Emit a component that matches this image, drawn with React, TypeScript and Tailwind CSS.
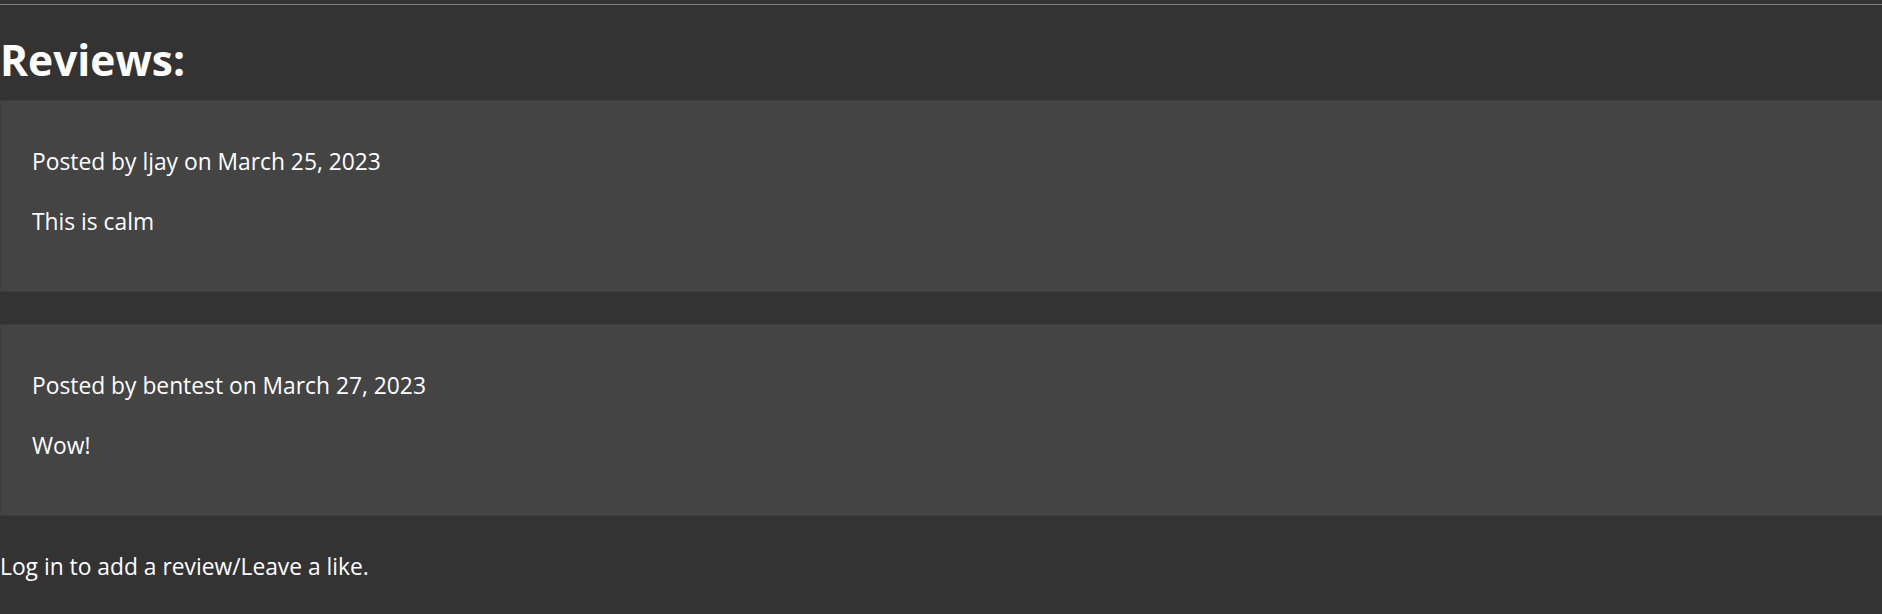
const reviews = [
  { user: "ljay", date: "March 25, 2023", body: "This is calm" },
  { user: "bentest", date: "March 27, 2023", body: "Wow!" },
];

export default function App() {
  return (
    <div className="min-h-[614px] bg-[#333333] pt-1 text-white font-['Open_Sans',sans-serif]">
      <div className="h-px bg-[#7c7c7c]" />
      <h1 className="mt-[33px] mb-[18px] text-[42.5px] leading-[44px] font-bold">Reviews:</h1>

      <div className="flex flex-col gap-8">
        {reviews.map((review, index) => (
          <div
            key={index}
            className="border border-r-0 border-[#3c3c3c] bg-[#444444] pl-[31px] pt-[47px] pb-[55px] text-[22.8px] leading-[28px]"
          >
            <p>
              Posted by {review.user} on {review.date}
            </p>
            <p className="mt-8">{review.body}</p>
          </div>
        ))}
      </div>

      <p className="mt-[37px] text-[22.8px] leading-[28px]">Log in to add a review/Leave a like.</p>
    </div>
  );
}
